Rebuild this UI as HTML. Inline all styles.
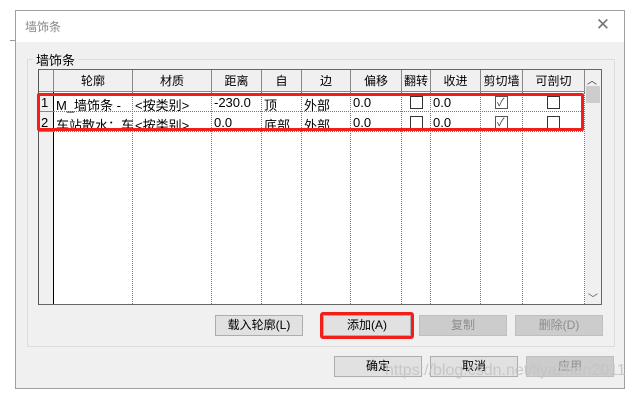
<!DOCTYPE html><html><head><meta charset="utf-8"><style>
body{margin:0;width:643px;height:402px;background:#fff;position:relative;overflow:hidden;font-family:"Liberation Sans","Noto Sans CJK SC",sans-serif;font-size:12px;color:#000}
.a{position:absolute;box-sizing:border-box}
.dlg{left:15px;top:10px;width:610px;height:379px;border:1px solid #a0a0a0;background:#f0f0f0}
.tb{left:0;top:0;width:608px;height:31px;background:#fff}
.btn{background:#e1e1e1;border:1px solid #adadad;text-align:center;line-height:19px;font-size:12px}
.dis{background:#cccccc;border-color:#bfbfbf;color:#8d8d8d}
.hd{background:#f0f0f0;border-right:1px solid #888;border-bottom:1px solid #888;text-align:center;line-height:22px}
.cb{position:absolute;width:13px;height:13px;border:1px solid #333;background:#fff;box-sizing:border-box}
</style></head><body>
<div class="a" style="left:10px;top:40px;width:5px;height:8px;border-top:1px solid #999"></div>
<div class="a dlg">
 <div class="a tb"><span style="position:absolute;left:9px;top:7px;color:#888;font-size:12px">墙饰条</span><span style="position:absolute;right:14px;top:4px;color:#777;font-size:17px">✕</span></div>
</div>
<div class="a" style="left:27px;top:59px;width:588px;height:288px;border:1px solid #dcdcdc"></div>
<div class="a" style="left:33px;top:50px;background:#f0f0f0;padding:0 3px;font-size:13px">墙饰条</div>
<div class="a" style="left:38px;top:69px;width:564px;height:236px;background:#fff;border:1px solid #666;border-left:2px solid #555"></div>
<div class="a" style="left:39px;top:70px;width:15px;height:234px;background:#f0f0f0;border-right:1px solid #000"></div>
<div id="g"></div>
<div class="a" style="left:585px;top:70px;width:16px;height:234px;background:#f0f0f0"></div>
<div class="a" style="left:586px;top:86px;width:14px;height:17px;background:#cdcdcd"></div>
<div class="a" style="left:587px;top:72px;font-size:10px;color:#333">︿</div>
<div class="a" style="left:588px;top:290px;font-size:10px;color:#555">﹀</div>
<div class="a" style="left:37px;top:93px;width:547px;height:38px;border:3px solid #f21e17;border-radius:2px"></div>
<div class="a btn" style="left:215px;top:315px;width:88px;height:21px">载入轮廓(L)</div>
<div class="a" style="left:320px;top:312px;width:94px;height:27px;border:3px solid #f21e17;border-radius:3px"></div>
<div class="a btn" style="left:323px;top:315px;width:88px;height:21px">添加(A)</div>
<div class="a btn dis" style="left:419px;top:315px;width:88px;height:21px">复制</div>
<div class="a btn dis" style="left:515px;top:315px;width:88px;height:21px">删除(D)</div>
<div class="a btn" style="left:334px;top:356px;width:88px;height:21px">确定</div>
<div class="a btn" style="left:430px;top:356px;width:88px;height:21px">取消</div>
<div class="a btn dis" style="left:526px;top:356px;width:88px;height:21px">应用</div>
<div class="a" style="left:385px;top:362px;font-size:16px;color:rgba(195,195,195,0.9);white-space:nowrap">https://blog.csdn.net/liyazhen2011</div>
<script>
var cols=[[54,133,'轮廓'],[133,212,'材质'],[212,262,'距离'],[262,302,'自'],[302,351,'边'],[351,402,'偏移'],[402,431,'翻转'],[431,481,'收进'],[481,523,'剪切墙'],[523,585,'可剖切']];
var rows=[['M_墙饰条 -','<按类别>','-230.0','顶','外部','0.0','c','0.0','v','c'],['车站散水：车','<按类别>','0.0','底部','外部','0.0','c','0.0','v','c']];
var h='';
cols.forEach(function(c,i){
 h+='<div class="a hd" style="left:'+c[0]+'px;top:70px;width:'+(c[1]-c[0])+'px;height:22px">'+c[2]+'</div>';
 h+='<div class="a" style="left:'+(c[1]-1)+'px;top:92px;width:0;height:212px;border-left:1px dotted #777"></div>';
});
h+='<div class="a" style="left:39px;top:70px;width:15px;height:22px;background:#f0f0f0;border-right:1px solid #888;border-bottom:1px solid #888"></div>';
rows.forEach(function(r,ri){
 var y=92+ri*20;
 h+='<div class="a" style="left:54px;top:'+(y+19)+'px;width:531px;border-top:1px dotted #777"></div>';
 h+='<div class="a" style="left:41px;top:'+(y+3)+'px;font-size:13px">'+(ri+1)+'</div>';
 h+='<div class="a" style="left:39px;top:'+(y+19)+'px;width:15px;border-top:1px solid #888"></div>';
 r.forEach(function(t,i){var c=cols[i];
  if(t=='c'||t=='v'){var cx=(c[0]+c[1])/2-7;h+='<div class="cb" style="left:'+cx+'px;top:'+(y+4)+'px;border-color:'+(t=='v'?'#555':'#333')+'">'+(t=='v'?'<span style="position:absolute;left:1px;top:-3px;font-size:11px;color:#444">✓</span>':'')+'</div>';}
  else h+='<div class="a" style="left:'+(c[0]+2)+'px;top:'+(y+3)+'px;font-size:13px;white-space:nowrap">'+t.replace(/</g,'&lt;')+'</div>';
 });
});
document.getElementById('g').innerHTML=h;
</script>
</body></html>
